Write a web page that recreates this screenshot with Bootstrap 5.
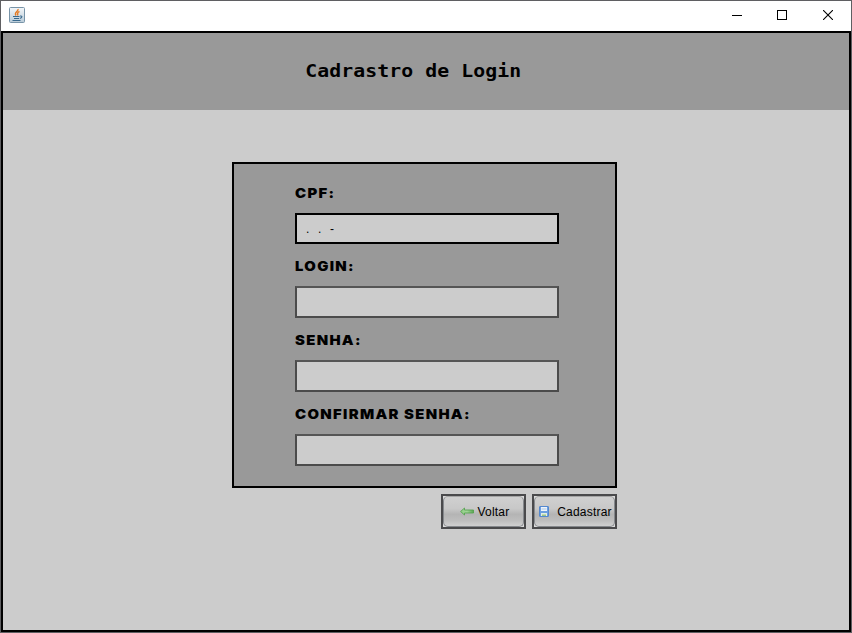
<!DOCTYPE html>
<html lang="pt-BR">
<head>
<meta charset="utf-8">
<meta name="viewport" content="width=device-width, initial-scale=1">
<title>Cadrastro de Login</title>
<link href="https://cdn.jsdelivr.net/npm/bootstrap@5.3.0/dist/css/bootstrap.min.css" rel="stylesheet">
<style>
body{font-family:"Liberation Sans",Arial,sans-serif;color:#000;overflow:hidden}
.app-window{width:852px;height:633px;border:1px solid #5f5f62;background:#fff}
.title-bar{height:30px;padding-left:8px;flex:none}
.title-bar>svg{margin-bottom:2px}
.win-btn{width:46px;height:30px;padding:0 0 2px;border:0;background:none;line-height:0}
.win-btn.minimize{padding-left:2px}
.win-btn svg,.title-bar svg{display:block}
.client{border:2px solid #000;background:#ccc}
.banner{height:77px;background:#999;padding:0 26px 2px 0}
.banner h1{font:bold 18px/24px "DejaVu Sans Mono",monospace;letter-spacing:.08px;margin:0;white-space:pre;transform:scaleX(1.1)}
.form-area{width:385px;margin:52px 0 0 229px}
.form-panel{height:326px;border:2px solid #000;background:#999;padding:19px 56px 0 61px}
.form-panel label{display:block;height:20px;font:900 13.5px/20px Inter,"Liberation Sans",Arial,sans-serif;letter-spacing:1.2px;margin-bottom:10px;white-space:nowrap;transform:scaleX(1.1);transform-origin:left}
.form-panel .form-control{width:264px;height:32px;border:2px solid #4b4b4b;border-top-color:#555;border-radius:0;background:#ccc;padding:0 8px;font-size:12px;color:#000;box-shadow:none}
.form-panel .form-control.active-field{height:31px;border-color:#000;white-space:pre;word-spacing:1px;padding-left:9px}
.field{margin-bottom:12px}
.actions{gap:6px;margin-top:6px}
.metal{width:85px;height:35px;border:2px solid #4a4a4c;border-radius:0;padding:0;background:#dcdcdc;font-size:12px;line-height:16px;color:#000}
.metal .face{width:81px;height:31px;border:1px solid #85888c;border-top-color:#a5a5a5;border-radius:5px;background:linear-gradient(#d0d0d0 0,#c8c8c8 40%,#b4b4b4 60%,#bdbdbd 80%,#d0d0d0 100%);overflow:hidden;letter-spacing:.2px;padding-left:2px}
</style>
<script src="https://cdn.jsdelivr.net/npm/bootstrap@5.3.0/dist/js/bootstrap.bundle.min.js"></script>
</head>
<body>
<div class="app-window d-flex flex-column">
  <div class="title-bar d-flex align-items-center justify-content-between">
    <svg width="16" height="16" viewBox="0 0 16 16">
      <defs><linearGradient id="jv" x2="0" y2="1"><stop stop-color="#f4f7f9"/><stop offset="1" stop-color="#b9cbd8"/></linearGradient></defs>
      <rect x=".5" y=".5" width="15" height="15" rx="1" fill="url(#jv)" stroke="#7894a8"/>
      <path d="M9 2C10 4.500 4.500 5 7 8.500M10.500 4.500C7 5.700 9.500 6.500 8.500 8.500" fill="none" stroke="#e57a22" stroke-width="1.400"/>
      <path d="M4 9.500H10.500M5 11.500H10M3.500 13.500H11.500M11 9C14 8.500 13 11.200 10.800 11.400" fill="none" stroke="#39698d" stroke-width="1.100"/>
    </svg>
    <div class="d-flex">
      <button class="win-btn minimize d-flex align-items-center justify-content-center" aria-label="Minimizar"><svg width="10" height="10" viewBox="0 0 10 10" shape-rendering="crispEdges"><path d="M0 5.500H10" stroke="#000"/></svg></button>
      <button class="win-btn d-flex align-items-center justify-content-center" aria-label="Maximizar"><svg width="10" height="10" viewBox="0 0 10 10" shape-rendering="crispEdges"><path d="M.5.500h9v9h-9z" fill="none" stroke="#000"/></svg></button>
      <button class="win-btn d-flex align-items-center justify-content-center" aria-label="Fechar"><svg width="10" height="10" viewBox="0 0 10 10"><path d="M0 0L10 10M10 0L0 10" stroke="#000" stroke-width="1.100"/></svg></button>
    </div>
  </div>
  <main class="client flex-grow-1">
    <header class="banner d-flex align-items-center justify-content-center"><h1>Cadrastro de Login</h1></header>
    <form class="form-area">
      <div class="form-panel">
        <div class="field"><label for="cpf">CPF:</label><div id="cpf" class="form-control active-field d-flex align-items-center">.  .  -</div></div>
        <div class="field"><label for="login">LOGIN:</label><input id="login" class="form-control"></div>
        <div class="field"><label for="senha">SENHA:</label><input id="senha" type="password" class="form-control"></div>
        <div class="field"><label for="conf">CONFIRMAR SENHA:</label><input id="conf" type="password" class="form-control"></div>
      </div>
      <div class="actions d-flex justify-content-end">
        <button type="button" class="btn metal"><span class="face d-flex align-items-center justify-content-center gap-1">
          <svg width="14" height="9" viewBox="0 0 14 9"><defs><linearGradient id="ar"><stop stop-color="#8fce85"/><stop offset=".5" stop-color="#a0d496"/><stop offset="1" stop-color="#5aa553"/></linearGradient></defs><path d="M.6 4.500L4.500 1V3h9v3h-9v2z" fill="url(#ar)" stroke="#4f9f49" stroke-width=".8"/></svg>
          <span>Voltar</span></span></button>
        <button type="button" class="btn metal"><span class="face d-flex align-items-center justify-content-center">
          <svg class="me-2" width="10" height="11" viewBox="0 0 10 11"><rect x=".5" y=".5" width="9" height="10" rx=".5" fill="#6c9fe0" stroke="#5488cf"/><path d="M2 1h6v4H2z" fill="#eef4fb"/><path d="M2 7h6v3H2z" fill="#e4eee2"/><path d="M3 8.500h4V10H3z" fill="#9cc686"/><path d="M2.500 3h5" stroke="#a9c5e6"/></svg>
          <span>Cadastrar</span></span></button>
      </div>
    </form>
  </main>
</div>
</body>
</html>
